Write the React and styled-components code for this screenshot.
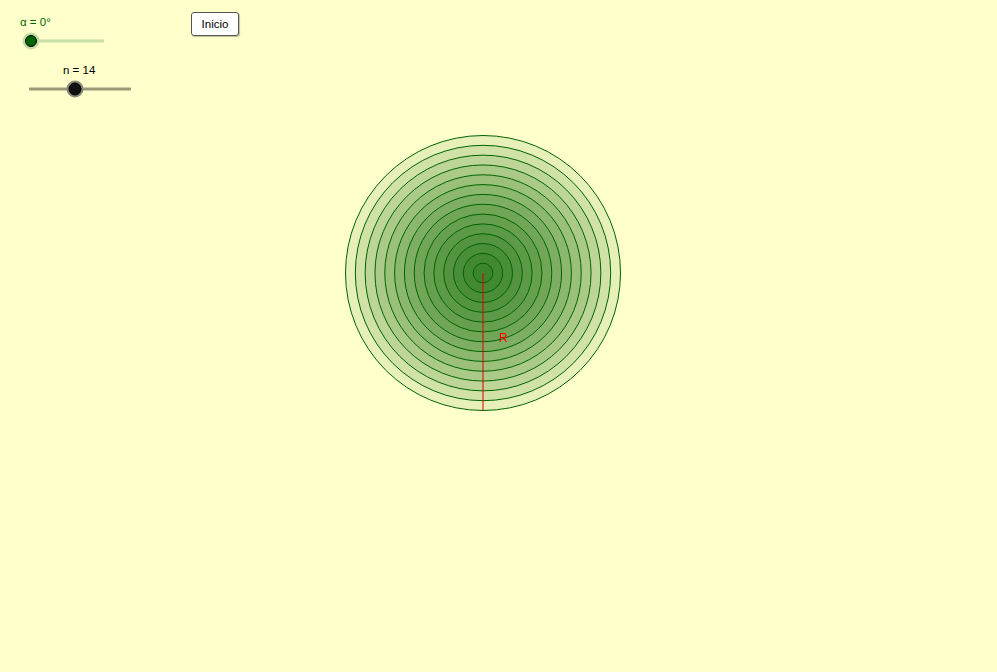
import React from "react";
import styled, { createGlobalStyle } from "styled-components";

const GlobalStyle = createGlobalStyle`
  html, body {
    margin: 0;
    padding: 0;
    background: #ffffcc;
  }
  body {
    font-family: "Liberation Sans", Arial, sans-serif;
  }
`;

const N = 14;
const CX = 483;
const CY = 273;
const R = 137.5;

const App = () => {
  const rings = [];
  for (let k = N; k >= 1; k--) {
    rings.push(
      <circle
        key={k}
        cx={CX}
        cy={CY}
        r={(R * k) / N}
        fill="rgba(0,100,0,0.095)"
        stroke="#006400"
        strokeWidth="1"
      />
    );
  }

  return (
    <>
      <GlobalStyle />
      <Canvas>
        <Drawing width="997" height="672">
          {rings}
          <line x1={CX} y1={CY} x2={CX} y2={CY + R} stroke="#e00000" strokeWidth="1" />
          <text x="499" y="342" fill="#ff0000" fontSize="12" fontFamily="Liberation Sans, Arial, sans-serif">
            R
          </text>
        </Drawing>

        <Controls>
          <SliderGroup>
            <SliderLabel $color="#006400">α = 0°</SliderLabel>
            <svg width="100" height="20" style={{ display: "block" }}>
              <line x1="11" y1="10" x2="84" y2="10" stroke="#c8e0a8" strokeWidth="3" />
              <circle cx="11" cy="10" r="8.5" fill="#c2dca2" />
              <circle cx="11" cy="10" r="5.5" fill="#006400" stroke="#000" strokeWidth="1" />
            </svg>
          </SliderGroup>

          <SliderGroup>
            <SliderLabel $color="#000" $indent={43}>n = 14</SliderLabel>
            <svg width="112" height="20" style={{ display: "block" }}>
              <line x1="9" y1="10" x2="111" y2="10" stroke="#9a9a78" strokeWidth="3" />
              <circle cx="55" cy="10" r="8.5" fill="#8a8a7a" />
              <circle cx="55" cy="10" r="6" fill="#111" stroke="#000" strokeWidth="1" />
            </svg>
          </SliderGroup>
        </Controls>

        <StartButton>Inicio</StartButton>
      </Canvas>
    </>
  );
};

export default App;

const Canvas = styled.div`
  position: relative;
  width: 997px;
  height: 672px;
  background: #ffffcc;
  overflow: hidden;
`;

const Drawing = styled.svg`
  display: block;
`;

const Controls = styled.div`
  position: absolute;
  left: 20px;
  top: 15px;
  display: flex;
  flex-direction: column;
  gap: 12px;
`;

const SliderGroup = styled.div`
  display: flex;
  flex-direction: column;
  gap: 2px;
`;

const SliderLabel = styled.span`
  font-size: 11.5px;
  line-height: 14px;
  color: ${(p) => p.$color};
  padding-left: ${(p) => p.$indent || 0}px;
`;

const StartButton = styled.button`
  position: absolute;
  left: 191px;
  top: 12px;
  width: 48px;
  height: 24px;
  padding: 0;
  background: #ffffff;
  border: 1px solid #555;
  border-radius: 3px;
  box-shadow: 1px 1px 1px rgba(0, 0, 0, 0.25);
  font-family: "Liberation Sans", Arial, sans-serif;
  font-size: 11.5px;
  color: #000;
  cursor: pointer;
`;
